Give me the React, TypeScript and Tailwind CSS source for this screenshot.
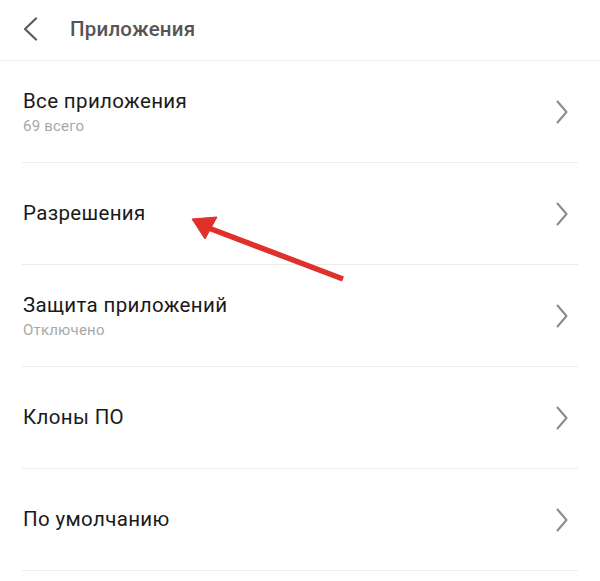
import React from "react";

const rows = [
  { title: "Все приложения", sub: "69 всего" },
  { title: "Разрешения" },
  { title: "Защита приложений", sub: "Отключено" },
  { title: "Клоны ПО" },
  { title: "По умолчанию" },
];

function Chevron() {
  return (
    <svg width="12" height="24" viewBox="0 0 12 24" className="shrink-0">
      <polyline points="1.5,1.5 10.5,12 1.5,22.5" fill="none" stroke="#8a8a8a" strokeWidth="2" strokeLinecap="round" strokeLinejoin="round" />
    </svg>
  );
}

export default function App() {
  return (
    <div className="relative w-[600px] h-[581px] overflow-hidden bg-white" style={{ fontFamily: "Roboto, 'Noto Sans', sans-serif" }}>
      <div className="h-[61px] flex items-center border-b border-[#ececec]">
        <svg width="16" height="24" viewBox="0 0 16 24" className="ml-[23px] mt-[-2px]">
          <polyline points="13,1.5 2,12 13,22.5" fill="none" stroke="#5a5a5a" strokeWidth="2.2" strokeLinecap="round" strokeLinejoin="round" />
        </svg>
        <span className="ml-[31px] mt-[-2px] text-[20.5px] tracking-[0.2px] font-medium text-[#555555]">Приложения</span>
      </div>
      <div className="px-[22px]">
        {rows.map((r) => (
          <div key={r.title} className="h-[102px] flex items-center justify-between border-b border-[#ececec] pr-[10px]">
            <div className="flex flex-col pl-[1px]">
              <span className="text-[20.5px] leading-[27px] tracking-[0.35px] text-[#1a1a1a]">{r.title}</span>
              {r.sub && <span className="text-[15px] leading-[20px] mt-[1px] tracking-[0.2px] text-[#a8a8a8]">{r.sub}</span>}
            </div>
            <Chevron />
          </div>
        ))}
      </div>
      <svg className="absolute left-0 top-0 pointer-events-none" width="600" height="581">
        <line x1="343" y1="279" x2="206" y2="227" stroke="#e0302c" strokeWidth="5.5" strokeLinecap="butt" />
        <polygon points="192,219 217,217 205,239" fill="#e0302c" stroke="#e0302c" strokeWidth="1" strokeLinejoin="round" />
      </svg>
    </div>
  );
}
